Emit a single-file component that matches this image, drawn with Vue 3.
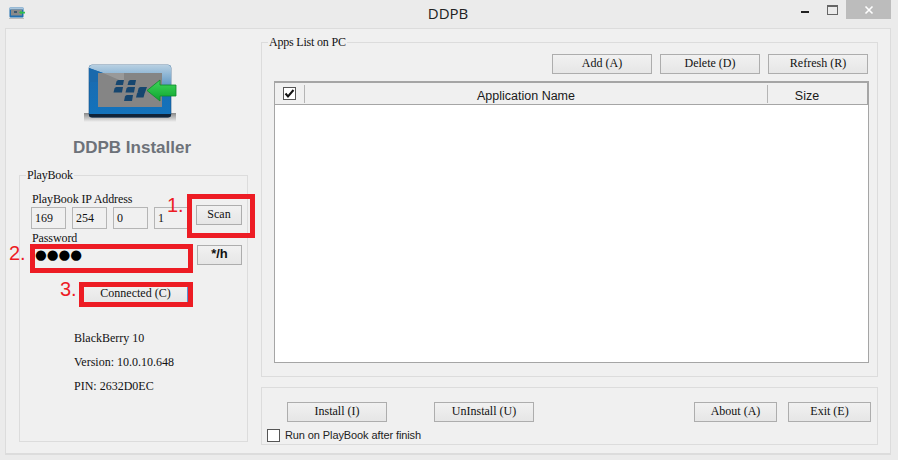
<script setup>
const ipParts = ['169', '254', '0', '1']
const deviceInfo = ['BlackBerry 10', 'Version: 10.0.10.648', 'PIN: 2632D0EC']
const appActions = ['Add (A)', 'Delete (D)', 'Refresh (R)']
</script>

<template>
  <div class="window">
    <header class="titlebar">
      <svg class="app-icon" width="16" height="12" viewBox="0 0 16 12">
        <rect x="0.5" y="0.5" width="14" height="10" rx="1" fill="#1f6fb0" />
        <rect x="0.5" y="0.5" width="14" height="2" fill="#a9c6dd" />
        <rect x="2" y="2.5" width="11" height="6" fill="#8a8a8a" />
        <rect x="5" y="4" width="3" height="2" fill="#3c5870" />
        <path d="M10 5.5 12.5 3.5V4.8H16V6.4H12.5V7.6Z" fill="#2fc04a" />
        <rect x="0" y="11" width="15" height="1" fill="#bbb" />
      </svg>
      <div class="title">DDPB</div>
      <div class="controls">
        <span class="min"></span>
        <span class="max"></span>
        <span class="close">
          <svg width="10" height="10" viewBox="0 0 10 10">
            <path d="M1.5 1.5 8.5 8.5M8.5 1.5 1.5 8.5" stroke="#fff" stroke-width="1.6" />
          </svg>
        </span>
      </div>
    </header>

    <main class="client">
      <section class="left">
        <svg class="logo" width="94" height="60" viewBox="0 0 94 60">
          <defs>
            <linearGradient id="shadow" x1="0" y1="0" x2="0" y2="1">
              <stop offset="0" stop-color="#666" />
              <stop offset="1" stop-color="#f0f0f0" />
            </linearGradient>
            <linearGradient id="top" x1="0" y1="0" x2="0" y2="1">
              <stop offset="0" stop-color="#b8d0e2" />
              <stop offset="1" stop-color="#5d96c4" />
            </linearGradient>
            <linearGradient id="body" x1="0" y1="0" x2="0" y2="1">
              <stop offset="0" stop-color="#1b69ad" />
              <stop offset="1" stop-color="#1273bd" />
            </linearGradient>
            <linearGradient id="arrow" x1="0" y1="0" x2="0" y2="1">
              <stop offset="0" stop-color="#3fd75a" />
              <stop offset="1" stop-color="#0fa32f" />
            </linearGradient>
          </defs>
          <rect x="0" y="51" width="92" height="9" fill="url(#shadow)" opacity="0.75" />
          <rect x="5" y="3" width="82" height="52" rx="3" fill="url(#body)" stroke="#174f80" stroke-width="0.6" />
          <path d="M5 6Q5 3 8 3H84Q87 3 87 6V24H78V11H19L5 6Z" fill="url(#top)" />
          <path d="M14 11H78V45H14Z" fill="#858585" />
          <path d="M19 11 40 20V11Z" fill="#999" />
          <path d="M5 6 19 11H14V20H5Z" fill="#1a69ac" />
          <path d="M5 52H87V53Q87 55.500 84 55.500H8Q5 55.500 5 53Z" fill="#10243a" />
          <g fill="#16466f">
            <path d="M32.500 19.500Q33 18 34.500 18H40L39 23H31.500Z" />
            <path d="M44.500 19.500Q45 18 46.500 18H52L51 23H43.500Z" />
            <path d="M30.500 26.500Q31 25 32.500 25H39L38 30.500H29.500Z" />
            <path d="M42.500 26.500Q43 25 44.500 25H51L50 30.500H41.500Z" />
            <path d="M54.500 26.500Q55 25 56.500 25H63L61 30.500H53.500Z" />
            <path d="M41 34.500Q41.500 33 43 33H49L48 39H40Z" />
            <path d="M53 31.500Q53.500 30 55 30H61L59.500 35.500H52Z" />
          </g>
          <path d="M63 28.500 76 18V23H92V34H76V39Z" fill="url(#arrow)" stroke="#0c8a2a" stroke-width="0.8" />
        </svg>
        <h1 class="brand">DDPB Installer</h1>

        <div class="group playbook">
          <span class="legend">PlayBook</span>
          <label class="field-label">PlayBook IP Address</label>
          <div class="ip-row">
            <span v-for="part in ipParts" :key="part" class="ip-box">{{ part }}</span>
            <button class="btn scan">Scan</button>
          </div>
          <label class="field-label password-label">Password</label>
          <div class="password-row">
            <span class="password">●●●●</span>
            <button class="btn toggle">*/h</button>
          </div>
          <button class="btn connect">Connected (C)</button>
          <div class="info">
            <p v-for="line in deviceInfo" :key="line">{{ line }}</p>
          </div>
        </div>
      </section>

      <section class="right">
        <div class="group apps">
          <span class="legend">Apps List on PC</span>
          <div class="app-actions">
            <button v-for="label in appActions" :key="label" class="btn wide">{{ label }}</button>
          </div>
          <div class="list">
            <div class="list-head">
              <div class="col-check">
                <svg class="head-check" width="13" height="13" viewBox="0 0 13 13">
                  <rect x="0.5" y="0.5" width="12" height="12" fill="#fff" stroke="#555" />
                  <path d="M2.500 6.500 5 9.500 10.500 3" fill="none" stroke="#111" stroke-width="2" />
                </svg>
              </div>
              <div class="col-name">Application Name</div>
              <div class="col-size">Size</div>
            </div>
          </div>
        </div>

        <div class="group footer">
          <div class="footer-actions">
            <button class="btn wide install">Install (I)</button>
            <button class="btn wide uninstall">UnInstall (U)</button>
            <button class="btn small about">About (A)</button>
            <button class="btn small">Exit (E)</button>
          </div>
          <div class="run-option">
            <span class="checkbox"></span>
            <span>Run on PlayBook after finish</span>
          </div>
        </div>
      </section>
    </main>

    <div class="mark box-1"></div>
    <div class="mark box-2"></div>
    <div class="mark box-3"></div>
    <span class="num num-1">1.</span>
    <span class="num num-2">2.</span>
    <span class="num num-3">3.</span>
  </div>
</template>

<style>
html, body { margin: 0; padding: 0; background: #ebebeb; }
</style>

<style scoped>
.window {
  position: relative;
  width: 898px;
  height: 460px;
  overflow: hidden;
  background: #ebebeb;
  font-family: "Liberation Serif", serif;
  font-size: 12px;
  color: #111;
  box-sizing: border-box;
}
.titlebar {
  display: grid;
  grid-template-columns: 1fr auto 1fr;
  height: 28px;
  padding: 0 11px 0 9px;
  box-sizing: border-box;
  position: relative;
}
.app-icon { margin-top: 7px; }
.title {
  font: 15px/26px "Open Sans", sans-serif;
  color: #222;
}
.controls { display: flex; justify-content: flex-end; align-items: flex-start; margin-right: -4px; }
.min { width: 8px; height: 2px; background: #222; margin: 11px 18px 0 0; }
.max { width: 9px; height: 7px; border: 1px solid #666; border-top-width: 2px; box-sizing: content-box; margin: 5px 8px 0 0; }
.close {
  width: 45px; height: 19px; background: #bcbcbc;
  display: flex; align-items: center; justify-content: center;
}
.client {
  display: flex;
  gap: 13px;
  width: 886px;
  height: 427px;
  margin-left: 5px;
  padding: 13px 12px 0 13px;
  box-sizing: border-box;
  background: #f0f0f0;
  border: 1px solid #dcdcdc;
  border-width: 1px 1px 2px 1px;
}
.left { width: 229px; display: flex; flex-direction: column; align-items: center; }
.logo { margin-top: 20px; margin-left: -6px; display: block; }
.brand {
  margin: 17px 3px 0 0;
  font: bold 17px/18px "Liberation Sans", sans-serif;
  color: #6d7279;
}
.group {
  position: relative;
  border: 1px solid #dcdcdc;
  box-sizing: border-box;
}
.legend {
  position: absolute;
  top: -7px;
  left: 6px;
  padding: 0 1px;
  background: #f0f0f0;
  line-height: 13px;
  letter-spacing: -0.2px;
}
.playbook {
  align-self: stretch;
  height: 267px;
  margin-top: 18px;
  padding: 16px 0 0 11px;
  display: flex;
  flex-direction: column;
  align-items: flex-start;
}
.field-label { display: block; margin-left: 1px; line-height: 14px; letter-spacing: -0.1px; }
.ip-row { display: flex; gap: 6px; margin-top: 1px; align-items: flex-start; }
.ip-box {
  width: 35px; height: 22px; box-sizing: border-box;
  border: 1px solid #b5b5b5; background: #f0f0f0;
  padding: 3px 0 0 3px; line-height: 14px;
  font-size: 12px;
}
.btn {
  display: block;
  box-sizing: border-box;
  height: 20px;
  padding: 0 0 2px;
  border: 1px solid #adadad;
  border-radius: 0;
  background: linear-gradient(#f1f1f1, #e6e6e6);
  font: 12px/16px "Liberation Serif", serif;
  color: #111;
}
.scan { width: 46px; margin: -2px 0 0 1px; }
.password-label { margin-top: 2px; }
.password-row { display: flex; align-items: flex-start; }
.password {
  width: 158px; height: 24px; box-sizing: border-box;
  padding-left: 4px;
  background: #f0f0f0;
  font: 13.500px/18px "DejaVu Sans", sans-serif;
  color: #000;
}
.toggle {
  width: 45px; margin-left: 8px;
  font: bold 13px/16px "Liberation Sans", sans-serif;
}
.connect {
  width: 105px; margin: 15px 0 0 52px;
  border-right-color: #5b8fd0;
}
.info { margin: 27px 0 0 43px; }
.info p { margin: 0 0 10px; line-height: 14px; }
.right { width: 617px; display: flex; flex-direction: column; gap: 10px; }
.apps { height: 335px; padding: 11px 8px 0 12px; }
.app-actions { display: flex; justify-content: flex-end; gap: 8px; padding-right: 1px; }
.wide { width: 100px; }
.list {
  margin-top: 7px;
  height: 282px;
  box-sizing: border-box;
  border: 1px solid #a5a5a5;
  border-top-width: 2px;
  background: #fff;
}
.list-head {
  display: flex;
  height: 22px;
  box-sizing: border-box;
  background: #f0f0f0;
  border-bottom: 1px solid #a5a5a5;
  border-right: 1px solid #a5a5a5;
  font: 12.500px/26px "Liberation Sans", sans-serif;
  color: #1a1a1a;
}
.col-check { width: 30px; flex: none; position: relative; }
.col-check::after, .col-size::before {
  content: "";
  position: absolute;
  left: 0; top: 2px; bottom: 1px;
  width: 1px;
  background: #b5b5b5;
}
.col-check::after { left: 29px; }
.head-check { display: block; margin: 4px 0 0 8px; }
.col-name { flex: 1; text-align: center; padding-right: 20px; }
.col-size { width: 100px; flex: none; box-sizing: border-box; text-align: center; position: relative; padding-right: 20px; }
.footer { height: 58px; padding: 14px 0 0 25px; }
.footer-actions { display: flex; }
.uninstall { margin-left: 47px; }
.small { width: 83px; }
.about { margin-left: 160px; margin-right: 11px; }
.run-option {
  display: flex; align-items: center; gap: 5px;
  margin: 6px 0 0 -20px;
  font: 11px/14px "Liberation Sans", sans-serif;
  letter-spacing: -0.1px;
  color: #222;
}
.checkbox {
  width: 13px; height: 13px; box-sizing: border-box;
  border: 1px solid #555; background: #fff;
}
.mark {
  position: absolute;
  box-sizing: border-box;
  border: 5px solid #ed1c24;
}
.box-1 { left: 187px; top: 194px; width: 68px; height: 44px; }
.box-2 { left: 30px; top: 244px; width: 163px; height: 29px; }
.box-3 { left: 79px; top: 282px; width: 114px; height: 25px; }
.num {
  position: absolute;
  font: 20px/20px "Liberation Sans", sans-serif;
  color: #ed1c24;
}
.num-1 { left: 167px; top: 195px; }
.num-2 { left: 9px; top: 243px; }
.num-3 { left: 60px; top: 279px; }
</style>
